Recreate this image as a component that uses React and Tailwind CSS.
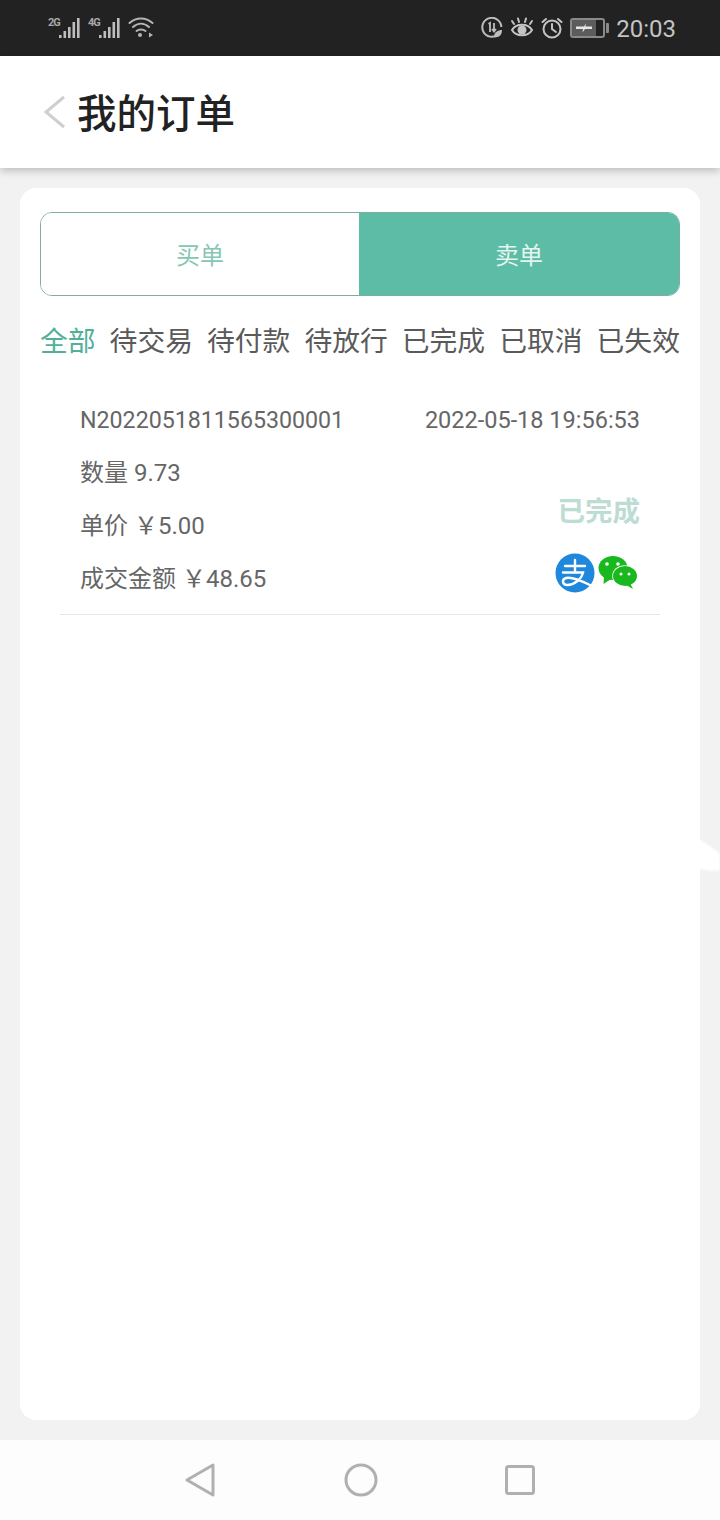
const cjk = { fontFamily: '"Roboto", "Noto Sans CJK SC", sans-serif' };

function Signal({ label }) {
  return (
    <div className="relative h-[26px] w-[33px]">
      <span className="absolute left-0 top-[2px] text-[11px] font-bold leading-[11px] tracking-[-1px] text-[#a8a8a8]">{label}</span>
      <svg className="absolute left-0 top-0" width="33" height="26" viewBox="0 0 33 26" fill="#bdbdbd">
        <rect x="11" y="20" width="2.600" height="3" />
        <rect x="15.500" y="16" width="2.600" height="7" />
        <rect x="20" y="12" width="2.600" height="11" />
        <rect x="24.500" y="7" width="2.600" height="16" />
        <rect x="29" y="3" width="2.600" height="20" />
      </svg>
    </div>
  );
}

function Wifi() {
  return (
    <svg width="26" height="22" viewBox="0 0 26 22" fill="none" stroke="#b5b5b5" strokeWidth="2" strokeLinecap="round">
      <path d="M1.500 6 C8 0 18 0 24.500 6" />
      <path d="M5 10 C10 5.500 16 5.500 21 10" />
      <path d="M8.500 14 C11 12 15 12 17.500 14" />
      <circle cx="12" cy="18" r="2" fill="#b5b5b5" stroke="none" />
      <path d="M21 15.500 L25 18 L21 20.500 Z" fill="#b5b5b5" stroke="none" />
    </svg>
  );
}

function SyncIcon() {
  return (
    <svg width="22" height="22" viewBox="0 0 22 22" fill="none" stroke="#bdbdbd" strokeWidth="2">
      <path d="M17 17.500 A9.500 9.500 0 1 1 20.300 10" />
      <path d="M7.500 7 L9 6 V15" strokeWidth="1.800" />
      <path d="M13 6 V14 M11 12 L13 14.500 L15 12" strokeWidth="1.800" />
      <path d="M13 20 C13 15 17 13 21 13 C21 18 18 21 13 20 Z" fill="#bdbdbd" stroke="none" />
    </svg>
  );
}

function EyeIcon() {
  return (
    <svg width="24" height="22" viewBox="0 0 24 22" fill="none" stroke="#c4c4c4" strokeWidth="2" strokeLinecap="round">
      <path d="M2 13 C6 6 18 6 22 13 C18 20 6 20 2 13 Z" />
      <circle cx="12" cy="13" r="4.500" fill="#c4c4c4" stroke="none" />
      <path d="M4 7 L2 4 M9 5 L8 1.500 M15 5 L16 1.500 M20 7 L22 4" />
    </svg>
  );
}

function AlarmIcon() {
  return (
    <svg width="22" height="22" viewBox="0 0 22 22" fill="none" stroke="#c4c4c4" strokeWidth="2" strokeLinecap="round">
      <circle cx="11" cy="12" r="8.500" />
      <path d="M11 7 V12 L15 15" />
      <path d="M1.500 5 L5 2 M20.500 5 L17 2" />
    </svg>
  );
}

function Battery() {
  return (
    <div className="flex items-center gap-[1px]">
      <div className="flex h-[20px] w-[35px] items-center overflow-hidden rounded-[3px] border-2 border-[#8a8a8a] bg-[#222222]">
        <div className="flex h-full w-[24px] items-center justify-center bg-[#5c5c5c]">
          <svg width="20" height="10" viewBox="0 0 20 10" fill="#e6e6e6">
            <path d="M2 3.500 H10 L12 0.500 L11.500 3.500 H18 V6 H11 L8.500 9.500 L9 6 H2 Z" />
          </svg>
        </div>
      </div>
      <div className="h-[10px] w-[3px] rounded-r-[1px] bg-[#8a8a8a]" />
    </div>
  );
}

function Alipay() {
  return (
    <svg width="40" height="40" viewBox="0 0 40 40">
      <circle cx="20" cy="20" r="19.500" fill="#1f87dc" />
      <g fill="none" stroke="#ffffff" strokeWidth="2.400" strokeLinecap="round">
        <path d="M10 13 H30" />
        <path d="M20 7 V19" />
        <path d="M8 19.500 H28 C26 27 19 32 12.500 32 C7 32 6.500 26.500 11 25 C17 23.500 27 28 37 33" />
      </g>
    </svg>
  );
}

function WeChat() {
  return (
    <svg width="40" height="34" viewBox="0 0 40 34">
      <ellipse cx="15" cy="12" rx="14.500" ry="12" fill="#19b81e" />
      <path d="M6 20 L5.500 28 L13 23 Z" fill="#19b81e" />
      <ellipse cx="27" cy="20" rx="12.800" ry="10.800" fill="#ffffff" />
      <ellipse cx="27" cy="20" rx="12" ry="10" fill="#19b81e" />
      <path d="M32 27 L35 33 L28 29 Z" fill="#19b81e" />
      <circle cx="9" cy="8" r="1.800" fill="#ffffff" />
      <circle cx="20" cy="8" r="1.800" fill="#ffffff" />
      <circle cx="23" cy="18" r="1.500" fill="#ffffff" />
      <circle cx="31" cy="18" r="1.500" fill="#ffffff" />
    </svg>
  );
}

export default function App() {
  const tabs = ['待交易', '待付款', '待放行', '已完成', '已取消', '已失效'];
  return (
    <div className="relative flex h-[1520px] w-[720px] flex-col overflow-hidden bg-[#f2f2f2]" style={cjk}>
      <div className="flex h-[56px] shrink-0 items-center justify-between bg-[#222222] pl-[48px] pr-[44px]">
        <div className="flex items-center gap-[7px]">
          <Signal label="2G" />
          <Signal label="4G" />
          <Wifi />
        </div>
        <div className="flex items-center gap-[7px]">
          <SyncIcon />
          <EyeIcon />
          <AlarmIcon />
          <Battery />
          <span className="pt-[2px] text-[24px] leading-none text-[#c4c4c4]">20:03</span>
        </div>
      </div>

      <div className="z-10 flex h-[112px] shrink-0 items-center gap-[11px] bg-white pl-[43px] shadow-[0_3px_8px_rgba(0,0,0,0.22)]">
        <svg width="23" height="34" viewBox="0 0 23 34" fill="none" stroke="#cfcfcf" strokeWidth="3">
          <path d="M21 2 L3 17 L21 32" />
        </svg>
        <span className="pt-[5px] text-[39.500px] font-medium leading-none text-[#222222]">我的订单</span>
      </div>

      <div className="mx-[20px] mt-[20px] flex h-[1232px] shrink-0 flex-col rounded-[16px] bg-white px-[20px] pt-[24px]">
        <div className="flex h-[84px] overflow-hidden rounded-[12px] border border-[#7fae9f]">
          <div className="flex w-[318px] items-center justify-center bg-white pt-[3px] text-[24px] text-[#85c6b4]">买单</div>
          <div className="flex flex-1 items-center justify-center bg-[#5dbca6] pt-[3px] text-[24px] text-[#e4f5f0]">卖单</div>
        </div>

        <div className="mt-[26px] flex items-center justify-between text-[27.800px] leading-[40px] text-[#5a5a5a]">
          <span className="text-[#52b09a]">全部</span>
          {tabs.map((t) => <span key={t}>{t}</span>)}
        </div>

        <div className="mx-[20px] mt-[22px] flex h-[231px] flex-col border-b border-[#e6e6e6] px-[20px] pt-[10px] text-[24px] leading-[53px] text-[#666666]">
          <div className="flex justify-between">
            <span className="text-[23.200px]">N2022051811565300001</span>
            <span className="text-[23.500px]">2022-05-18 19:56:53</span>
          </div>
          <div className="flex justify-between">
            <div className="flex flex-col">
              <span>数量 9.73</span>
              <span>单价 ￥5.00</span>
              <span>成交金额 ￥48.65</span>
            </div>
            <div className="flex flex-col items-end">
              <span className="mt-[45px] text-[27.500px] font-bold leading-[40px] text-[#bcdcd4]">已完成</span>
              <div className="mr-[2px] mt-[21px] flex items-center gap-[3px]">
                <Alipay />
                <WeChat />
              </div>
            </div>
          </div>
        </div>
      </div>

      <div className="mt-[20px] flex h-[80px] shrink-0 items-center justify-between bg-[#fdfdfd] pl-[184px] pr-[185px]">
        <svg width="32" height="36" viewBox="0 0 32 36" fill="none" stroke="#b0b0b0" strokeWidth="3" strokeLinejoin="round">
          <path d="M29 3 V33 L3 18 Z" />
        </svg>
        <svg width="34" height="34" viewBox="0 0 34 34" fill="none" stroke="#b0b0b0" strokeWidth="3">
          <circle cx="17" cy="17" r="15" />
        </svg>
        <svg width="30" height="30" viewBox="0 0 30 30" fill="none" stroke="#b0b0b0" strokeWidth="3" strokeLinejoin="round">
          <rect x="1.500" y="1.500" width="27" height="27" rx="2" />
        </svg>
      </div>

      <svg className="absolute left-[698px] top-[838px] blur-[1px]" width="22" height="36" viewBox="0 0 22 36" fill="#ffffff">
        <path d="M0 0 C8 6 16 10 22 16 V32 C14 34 6 32 0 30 Z" />
      </svg>
    </div>
  );
}
